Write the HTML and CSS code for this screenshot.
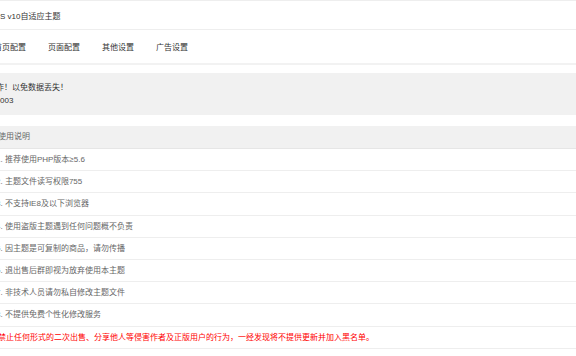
FILE: index.html
```html
<!DOCTYPE html>
<html lang="zh-CN">
<head>
<meta charset="utf-8">
<title>主题设置</title>
<link rel="stylesheet" href="styles.css">
</head>
<body>
<div class="page">
  <div class="title">S v10自适应主题</div>
  <div class="nav">
    <span class="tab">首页配置</span>
    <span class="tab">页面配置</span>
    <span class="tab">其他设置</span>
    <span class="tab">广告设置</span>
  </div>
  <div class="notice">
    <div class="line">作！以免数据丢失！</div>
    <div class="line num">003</div>
  </div>
  <div class="panel">
    <div class="head">使用说明</div>
    <div class="row">1. 推荐使用PHP版本≥5.6</div>
    <div class="row">2. 主题文件读写权限755</div>
    <div class="row">3. 不支持IE8及以下浏览器</div>
    <div class="row">4. 使用盗版主题遇到任何问题概不负责</div>
    <div class="row">5. 因主题是可复制的商品，请勿传播</div>
    <div class="row">6. 退出售后群即视为放弃使用本主题</div>
    <div class="row">7. 非技术人员请勿私自修改主题文件</div>
    <div class="row">8. 不提供免费个性化修改服务</div>
    <div class="row warn">禁止任何形式的二次出售、分享他人等侵害作者及正版用户的行为，一经发现将不提供更新并加入黑名单。</div>
  </div>
</div>
</body>
</html>
```

FILE: styles.css
```css
html, body {
  margin: 0;
  padding: 0;
  background: #fff;
  overflow: hidden;
}
body {
  font-family: "Liberation Sans", "Noto Sans CJK SC", sans-serif;
  font-size: 8px;
  color: #333;
}
.page {
  margin-left: -8px;
  width: calc(100% + 8px);
  border-top: 1px solid #eeeeee;
}
.title {
  height: 28px;
  display: flex;
  align-items: center;
  padding-left: 8px;
  border-bottom: 1px solid #eeeeee;
  white-space: nowrap;
}
.nav {
  height: 33px;
  display: flex;
  align-items: center;
  gap: 22px;
  padding-left: 2px;
  border-bottom: 2px solid #f2f2f2;
  white-space: nowrap;
}
.notice {
  margin-top: 8px;
  background: #f1f1f1;
  padding: 8px 0 8px 4px;
}
.line {
  line-height: 13px;
  white-space: nowrap;
}
.line.num {
  padding-left: 4px;
}
.panel {
  margin-top: 11px;
}
.head {
  height: 22px;
  line-height: 22px;
  background: #f1f1f1;
  color: #666;
  padding-left: 6px;
  border-bottom: 1px solid #e6e6e6;
}
.row {
  height: 21.2px;
  line-height: 21.2px;
  padding-left: 4px;
  color: #666;
  border-bottom: 1px solid #eeeeee;
  white-space: nowrap;
}
.row.warn {
  color: #ff0000;
  padding-left: 6px;
}
```
